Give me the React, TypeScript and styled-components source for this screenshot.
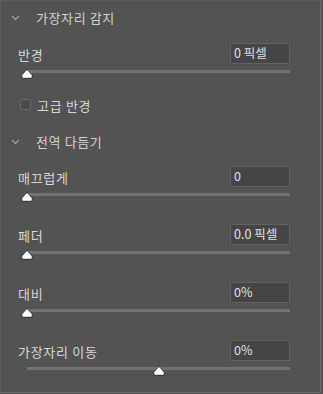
import React from "react";
import styled, { createGlobalStyle } from "styled-components";

const Global = createGlobalStyle`
  html, body { margin: 0; padding: 0; background: #535353; }
  body { font-family: "Noto Sans CJK KR", "Noto Sans", sans-serif; }
  * { box-sizing: border-box; }
`;

const Panel = styled.div`
  width: 321px;
  height: 393px;
  background: #535353;
  border-top: 1px solid #5c5c5c;
  border-left: 1px solid #5c5c5c;
  border-right: 1px solid #6a6a6a;
  border-bottom: 1px solid #6a6a6a;
  display: flex;
  flex-direction: column;
`;

const Header = styled.div`
  height: 33px;
  display: flex;
  align-items: center;
  padding-left: 10px;
  color: #d2d2d2;
  font-size: 13px;
  letter-spacing: 0.6px;
  line-height: 1;
  flex-shrink: 0;
`;

const Chevron = styled.svg`
  width: 9px;
  height: 6px;
  margin-right: 16px;
`;

const Content = styled.div<{ $top: number }>`
  padding: ${(p) => p.$top}px 30px 0 17px;
  display: flex;
  flex-direction: column;
  gap: 22px;
`;

const Block = styled.div`
  display: flex;
  flex-direction: column;
`;

const Row = styled.div`
  height: 21px;
  display: flex;
  align-items: center;
  justify-content: space-between;
`;

const Label = styled.span`
  color: #d8d8d8;
  font-size: 13px;
  letter-spacing: 0.7px;
  line-height: 1;
  padding-top: 1px;
`;

const Field = styled.div`
  width: 60px;
  height: 21px;
  background: #454545;
  border: 1px solid #626262;
  color: #e2e2e2;
  font-size: 12.5px;
  font-family: "Noto Sans CJK KR", "Noto Sans", sans-serif;
  display: flex;
  align-items: center;
  padding-left: 3px;
  line-height: 1;
`;

const SliderArea = styled.div`
  position: relative;
  margin-top: 5px;
  height: 10px;
  padding-left: 9px;
`;

const Track = styled.div`
  margin-top: 1px;
  height: 3px;
  background: #727272;
`;

const Thumb = styled.svg`
  position: absolute;
  top: 0;
  width: 12px;
  height: 10px;
  margin-left: -6px;
`;

const CheckRow = styled.div`
  display: flex;
  align-items: center;
  padding-left: 2px;
  height: 11px;
`;

const Box = styled.div`
  width: 11px;
  height: 11px;
  border: 1px solid #6a6a6a;
  border-radius: 2px;
  background: #4b4b4b;
  margin-right: 6px;
`;

const Spacer = styled.div<{ $h: number }>`
  height: ${(p) => p.$h}px;
  flex-shrink: 0;
`;

function Slider({ label, value, pct }: { label: string; value: string; pct: number }) {
  return (
    <Block>
      <Row>
        <Label>{label}</Label>
        <Field>{value}</Field>
      </Row>
      <SliderArea>
        <Track />
        <Thumb viewBox="0 0 12 10" style={{ left: `calc(9px + (100% - 9px) * ${pct})` }}>
          <path
            d="M6 0.8 Q6.6 0.8 7.2 1.5 L10.8 5.6 Q11.3 6.2 11.3 7 L11.3 8 Q11.3 9.3 10 9.3 L2 9.3 Q0.7 9.3 0.7 8 L0.7 7 Q0.7 6.2 1.2 5.6 L4.8 1.5 Q5.4 0.8 6 0.8 Z"
            fill="#ffffff"
            stroke="#2b2b2b"
            strokeWidth="1"
          />
        </Thumb>
      </SliderArea>
    </Block>
  );
}

function SectionHeader({ title }: { title: string }) {
  return (
    <Header>
      <Chevron viewBox="0 0 9 6">
        <path d="M1 1 L4.5 4.5 L8 1" fill="none" stroke="#a6a6a6" strokeWidth="1.1" />
      </Chevron>
      {title}
    </Header>
  );
}

export default function App() {
  return (
    <>
      <Global />
      <Panel>
        <SectionHeader title="가장자리 감지" />
        <Content $top={9}>
          <Slider label="반경" value="0 픽셀" pct={0} />
        </Content>
        <Spacer $h={20} />
        <Content $top={0}>
          <CheckRow>
            <Box />
            <Label>고급 반경</Label>
          </CheckRow>
        </Content>
        <Spacer $h={15} />
        <SectionHeader title="전역 다듬기" />
        <Content $top={8}>
          <Slider label="매끄럽게" value="0" pct={0} />
          <Slider label="페더" value="0.0 픽셀" pct={0} />
          <Slider label="대비" value="0%" pct={0} />
          <Slider label="가장자리 이동" value="0%" pct={0.5} />
        </Content>
      </Panel>
    </>
  );
}
